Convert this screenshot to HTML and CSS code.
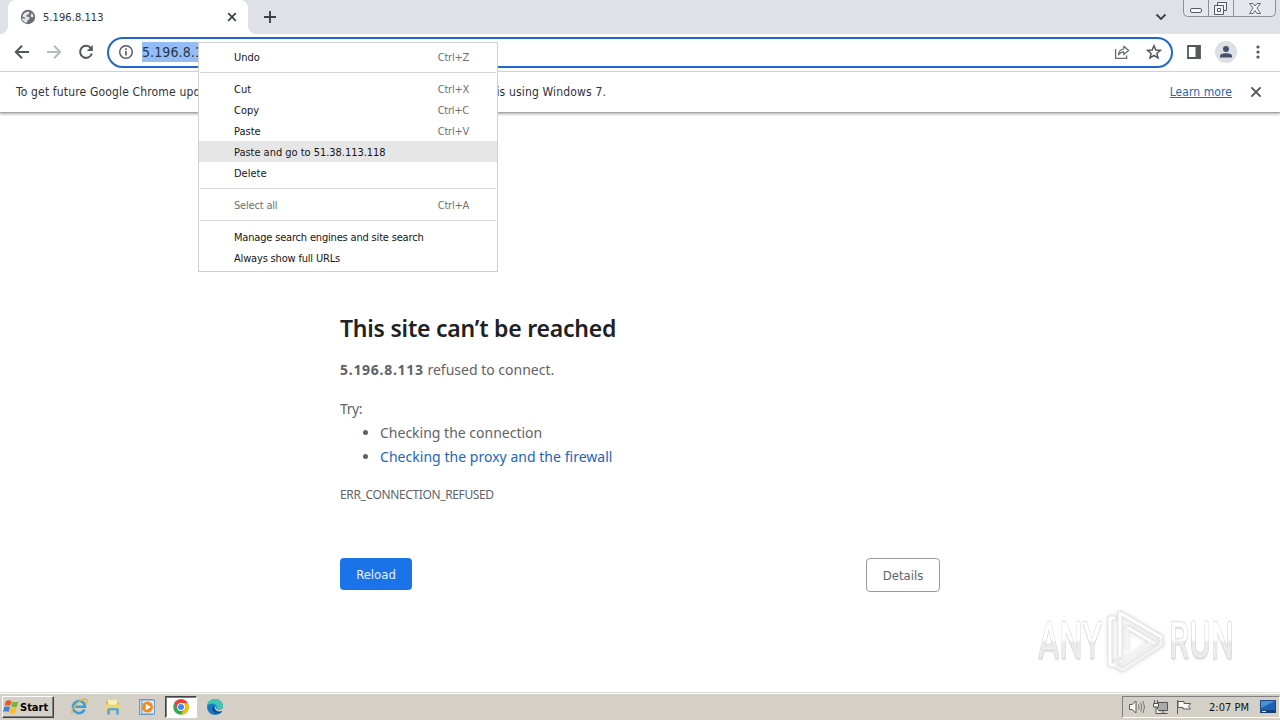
FILE: index.html
```html
<!DOCTYPE html>
<html lang="en">
<head>
<meta charset="utf-8">
<title>5.196.8.113</title>
<link rel="stylesheet" href="styles.css">
</head>
<body>
<div class="desktop">
  <header class="tabstrip">
    <div class="tab-prev"></div>
    <div class="tab">
      <svg class="favicon" width="16" height="16" viewBox="0 0 16 16"><circle cx="8" cy="8" r="7.2" fill="#6b6e73"/><path d="M2.200 7.600C3 5 5 3 7.800 2.400L9.600 3.200 8.600 5.400 6.600 6 6.200 7.400 9.200 8 9.800 9.600 7.600 11.600 7 13.800C4 13.600 2 11 2.200 9L5.400 10 4.600 8.200ZM11 4.800L12.400 4.600 13.600 7.400 12.200 8.600 10.600 7.400Z" fill="#e4e6e9"/></svg>
      <span class="tab-title">5.196.8.113</span>
      <svg class="tab-close" width="10" height="10" viewBox="0 0 10 10"><path d="M1.2 1.2L8.800 8.800M8.800 1.2L1.2 8.800" stroke="#3c4043" stroke-width="1.7"/></svg>
    </div>
    <svg class="new-tab" width="14" height="14" viewBox="0 0 14 14"><path d="M7 1V13M1 7H13" stroke="#3c4043" stroke-width="1.9"/></svg>
    <svg class="tab-search" width="12" height="8" viewBox="0 0 12 8"><path d="M1.5 1.5L6 6L10.5 1.5" fill="none" stroke="#3c4043" stroke-width="1.8"/></svg>
    <div class="window-buttons">
      <svg width="93" height="17" viewBox="0 0 93 17"><path d="M.5 0V12.500Q.5 16.500 4.500 16.500H88.500Q92.500 16.500 92.500 12.500V0M25.500 0V16M50.500 0V16" fill="none" stroke="#8b8f98"/><g fill="#f5f6f8" stroke="#555a62"><rect x="7.500" y="8.500" width="11" height="4" rx="1.500"/><path d="M34.500 2.500H43.500V10.500H34.500Z"/><path d="M31.500 5.500H40.500V14.500H31.500Z"/><path d="M34.500 8.500H37.500V11.500H34.500Z"/><path d="M66.500 3.500H70L72 6 74 3.500H77.500L74 8 77.500 13.500H74L72 10.500 70 13.500H66.500L70 8Z" stroke-width=".9"/></g></svg>
    </div>
  </header>

  <div class="toolbar">
    <svg class="back" width="16" height="16" viewBox="0 0 16 16"><path d="M15 8H2M8 1.700L1.800 8L8 14.300" fill="none" stroke="#54575b" stroke-width="2"/></svg>
    <svg class="forward" width="16" height="16" viewBox="0 0 16 16"><path d="M1 8H14M8 1.700L14.200 8L8 14.300" fill="none" stroke="#b9bbbe" stroke-width="2"/></svg>
    <svg class="reload" width="16" height="16" viewBox="0 0 16 16"><path d="M12.900 4.200A6 6 0 1 0 13.900 9.500" fill="none" stroke="#54575b" stroke-width="2"/><path d="M14.800 1V7H8.800Z" fill="#54575b"/></svg>
    <div class="omnibox">
      <svg class="info" width="16" height="16" viewBox="0 0 16 16"><circle cx="8" cy="8" r="6.300" fill="none" stroke="#54575b" stroke-width="1.400"/><path d="M8 7V11.600M8 4.300V5.900" stroke="#54575b" stroke-width="1.600"/></svg>
      <span class="url">5.196.8.113</span>
      <svg class="share" width="16" height="16" viewBox="0 0 16 16"><path d="M1.600 5V14.300H12.600V11.500" fill="none" stroke="#696c70" stroke-width="1.300"/><path d="M4.500 10.800C4.800 7 6.500 5.200 9.800 5V2.200L14.700 6.500 9.800 10.500V7.800C7.500 7.800 5.800 8.800 4.500 10.800Z" fill="none" stroke="#696c70" stroke-width="1.200" stroke-linejoin="round"/></svg>
      <svg class="star" width="16" height="16" viewBox="0 0 16 16"><path d="M8 1.700L9.800 6 14.400 6.400 10.900 9.400 12 14 8 11.500 4 14 5.100 9.400 1.600 6.400 6.200 6Z" fill="none" stroke="#54575b" stroke-width="1.500"/></svg>
    </div>
    <svg class="panel" width="14" height="14" viewBox="0 0 14 14"><path d="M1 1H13V13H1Z" fill="none" stroke="#54575b" stroke-width="1.800"/><path d="M8.500 1H13V13H8.500Z" fill="#54575b"/></svg>
    <svg class="avatar" width="22" height="22" viewBox="0 0 22 22"><circle cx="11" cy="11" r="11" fill="#dcdfe4"/><circle cx="11" cy="7.900" r="3" fill="#45506a"/><path d="M5 16.500V15Q5 12.300 11 12.300Q17 12.300 17 15V16.500Z" fill="#45506a"/></svg>
    <svg class="kebab" width="4" height="14" viewBox="0 0 4 14" fill="#54575b"><circle cx="2" cy="2" r="1.600"/><circle cx="2" cy="7" r="1.600"/><circle cx="2" cy="12" r="1.600"/></svg>
  </div>

  <div class="infobar">
    <span class="infobar-text">To get future Google Chrome updates, you'll need Windows 10 or later. This computer is using Windows 7.</span>
    <a class="learn">Learn more</a>
    <svg width="12" height="12" viewBox="0 0 12 12"><path d="M1.400 1.400L10.600 10.600M10.600 1.400L1.400 10.600" stroke="#54575b" stroke-width="1.900"/></svg>
  </div>

  <main class="page">
    <section class="error">
      <h1>This site can’t be reached</h1>
      <p class="summary"><b>5.196.8.113</b> <span>refused to connect.</span></p>
      <p class="try">Try:</p>
      <ul>
        <li>Checking the connection</li>
        <li><a>Checking the proxy and the firewall</a></li>
      </ul>
      <p class="code">ERR_CONNECTION_REFUSED</p>
      <div class="actions"><button class="primary">Reload</button><button class="secondary">Details</button></div>
    </section>
    <div class="watermark">
      <span>ANY</span>
      <svg width="60" height="64" viewBox="0 0 60 64" fill="none" stroke-linejoin="round" stroke-linecap="round"><g stroke="#e2e2e2" stroke-width="5"><path d="M8 9H4V56H8M14 47V4L55 28M21 18L48 34"/><path d="M10 53V57L16 61L55 36V30"/></g><g stroke="#fff" stroke-width="3"><path d="M8 9H4V56H8M14 47V4L55 28M21 18L48 34"/></g><path d="M10 53V57L16 61L55 36V30M14 53L46 33M21 18V40" stroke="#f3f3f3" stroke-width="3"/></svg>
      <span>RUN</span>
    </div>
  </main>

  <footer class="taskbar">
    <div class="start">
      <svg width="17" height="16" viewBox="0 0 17 16"><path d="M3 2Q6 .5 8.500 2L7.200 7Q4.500 5.700 1.600 7Z" fill="#e8562a"/><path d="M9.500 2.500Q12 4 15.500 2.500L14 7.700Q11 9 8.200 7.500Z" fill="#75b43c"/><path d="M1.300 8Q4 6.800 7 8L5.600 13Q3 11.600 0 13Z" fill="#3b83d1"/><path d="M7.900 8.500Q10.500 10 13.700 8.700L12.300 14Q9 15 6.500 13.500Z" fill="#f5bb2c"/></svg>
      <span>Start</span>
    </div>
    <div class="launch">
      <svg width="18" height="18" viewBox="0 0 18 18"><path d="M14.500 11.500A6 6 0 1 1 15 8.800H5.500" fill="none" stroke="#3a9edb" stroke-width="2.600"/><path d="M2.500 15.800C-1 13 11-1.500 16.300 1.800C17.500 3 16.500 4.800 15.800 5.800" fill="none" stroke="#e0b43c" stroke-width="1.400"/></svg>
    </div>
    <div class="launch">
      <svg width="18" height="18" viewBox="0 0 18 18"><path d="M2 3H7L8 5H15V13H2Z" fill="#dcb850"/><path d="M4 2H13V7H4Z" fill="#f7edb5"/><path d="M1.500 6.500H16.500V14H1.500Z" fill="#efd57a"/><path d="M3 16.500V12Q3 10 5 10H13Q15 10 15 12V16.500H12V12.500H6V16.500Z" fill="#63a8ce"/></svg>
    </div>
    <div class="launch">
      <svg width="18" height="18" viewBox="0 0 18 18"><rect x="1.500" y="1.500" width="13" height="15" fill="#bcd8ee" stroke="#6599c8"/><rect x="4" y="2" width="12.500" height="14" fill="#dceaf5" stroke="#6c9ac4"/><circle cx="9.500" cy="9" r="5.500" fill="#f28a1d"/><path d="M7.800 5.800L13 9L7.800 12.200Z" fill="#fff"/></svg>
    </div>
    <div class="launch active">
      <svg width="16" height="16" viewBox="0 0 16 16"><circle cx="8" cy="8" r="7.800" fill="#34a853"/><path d="M1.250 4.100A7.800 7.800 0 0 1 14.750 4.100L8 8Z" fill="#ea4335"/><path d="M14.750 4.100A7.800 7.800 0 0 1 8 15.800L11.400 10L8 4.100Z" fill="#fbbc05"/><path d="M1.250 4.100L4.600 10L8 8V4.100Z" fill="#ea4335"/><circle cx="8" cy="8" r="3.900" fill="#fff"/><circle cx="8" cy="8" r="3" fill="#4285f4"/></svg>
    </div>
    <div class="launch">
      <svg width="18" height="18" viewBox="0 0 18 18"><circle cx="9" cy="9" r="8" fill="#187ac5"/><path d="M1.200 8C1.500 3.500 5 1 9 1C14 1 17 4.500 17 8C17 11 14.500 12 12 11.600C10 11.300 11.500 10 10.500 8C9 5 4 4.500 1.200 8Z" fill="#41c6b4"/><path d="M6.800 8.500C5 12 8 16 13.500 15.500C16 14.500 16 13 15.800 12.700C12 15 8 12.500 8.500 9.500Z" fill="#114a91"/><path d="M9 8.500C11 9 9.700 11.300 12 11.800C14 12.300 16 11.500 17 9.800Q18 12 15.700 13C12 14.500 8.500 12 9 8.500Z" fill="#d5d2ca"/></svg>
    </div>
    <div class="tray">
      <svg width="18" height="16" viewBox="0 0 18 16"><path d="M1.500 5.500H4L8 2V14L4 10.500H1.500Z" fill="#f7f7f5" stroke="#5c5c5c"/><path d="M10.500 5.500Q12 8 10.500 10.500M12.700 3.500Q15 8 12.700 12.500M15 2Q18 8 15 14" fill="none" stroke="#777"/></svg>
      <svg width="18" height="16" viewBox="0 0 18 16"><path d="M5.500 3.500H15.500V11.500H5.500ZM7.500 14.500H15.500M11 11.500V14" fill="#aaa" stroke="#555"/><path d="M2.500 1V4M5.500 1V4M1.500 4.500H6.500V8H1.500ZM4 8V14.500H8" fill="#f5f5f5" stroke="#555"/></svg>
      <svg width="16" height="16" viewBox="0 0 16 16"><path d="M1.500 1V15M2 2.500H8V4.500H14.500L12.500 7.500 14.500 10H7V8.500H2Z" fill="#f7f7f5" stroke="#5c5c5c"/></svg>
      <span class="clock">2:07 PM</span>
      <svg width="16" height="14" viewBox="0 0 16 14"><path d="M.5.5H15.500V10.500H.5Z" fill="#2060b4" stroke="#174785"/><path d="M1 1H15L1 8Z" fill="#4d91d5"/><path d="M0 11H16V13H0Z" fill="#163d70"/><path d="M2 11.500H6" stroke="#d8ebfa"/></svg>
    </div>
  </footer>

  <div class="menu">
    <div class="item"><span>Undo</span><span class="key">Ctrl+Z</span></div>
    <hr>
    <div class="item"><span>Cut</span><span class="key">Ctrl+X</span></div>
    <div class="item"><span>Copy</span><span class="key">Ctrl+C</span></div>
    <div class="item"><span>Paste</span><span class="key">Ctrl+V</span></div>
    <div class="item hover"><span>Paste and go to 51.38.113.118</span></div>
    <div class="item"><span>Delete</span></div>
    <hr>
    <div class="item disabled"><span class="tight">Select all</span><span class="key">Ctrl+A</span></div>
    <hr>
    <div class="item"><span class="tight">Manage search engines and site search</span></div>
    <div class="item"><span class="tight">Always show full URLs</span></div>
  </div>
</div>
</body>
</html>
```
FILE: styles.css
```css
* { box-sizing: border-box; }
body { margin: 0; overflow: hidden; font-family: "DejaVu Sans Condensed", "Noto Sans", sans-serif; color: #303236; }
svg { display: block; flex: none; }
.desktop { position: relative; width: 1280px; height: 720px; display: flex; flex-direction: column; background: #fff; }

.tabstrip { height: 34px; flex: none; display: flex; align-items: center; background: linear-gradient(#dee1e6 24px, #fff 24px) left / 256px no-repeat #dee1e6; }
.tab-prev { width: 8px; height: 34px; border-bottom-right-radius: 8px; background: #dee1e6; }
.tab { width: 240px; height: 34px; display: flex; align-items: center; padding: 0 11px 0 12px; background: #fff; border-radius: 8px 8px 0 0; }
.tab-title { margin-left: 7px; flex: 1; font-size: 11px; letter-spacing: .07px; }
.new-tab { width: 32px; height: 34px; padding: 10px 3px 10px 15px; background: #dee1e6; border-bottom-left-radius: 8px; }
.tab-search { margin-left: auto; }
.window-buttons { margin-left: 16px; margin-right: 4px; align-self: flex-start; background: #e4e7eb; border-radius: 0 0 4px 4px; }

.toolbar { height: 38px; flex: none; display: flex; align-items: center; padding: 0 20px 0 14px; border-bottom: 1px solid #d9dadc; background: #fff; }
.toolbar svg { margin-bottom: 1px; }
.forward, .reload { margin-left: 16px; }
.omnibox { width: 1066px; height: 31px; margin-left: 13px; display: flex; align-items: center; padding: 0 9px; border: 2px solid #1f67c9; border-radius: 16px; }
.url { margin: 0 0 1px 8px; height: 20px; line-height: 21px; font-size: 14px; background: #94bdf5; color: #26364b; letter-spacing: .1px; }
.omnibox .share { margin-left: auto; }
.star { margin-left: 16px; }
.panel { margin-left: 14px; }
.avatar { margin-left: 14px; }
.kebab { margin-left: auto; }

.infobar { height: 41px; flex: none; display: flex; align-items: center; padding: 0 18px 0 16px; font-size: 12px; border-bottom: 1px solid #a6a7a8; box-shadow: 0 1px 3px #a9a9a9; background: #fff; z-index: 1; }
.infobar-text { flex: 1; white-space: nowrap; letter-spacing: .16px; }
.learn { color: #2865b5; text-decoration: underline; margin-right: 18px; letter-spacing: .08px; }

.page { height: 579px; flex: none; display: flex; position: relative; padding: 201px 0 0 340px; }
.error { width: 600px; font-family: "Noto Sans", sans-serif; color: #5f6368; font-size: 14px; }
h1 { margin: 0; height: 29px; line-height: 29px; font-size: 23px; font-weight: 600; color: #202124; white-space: nowrap; letter-spacing: -.22px; }
p { margin: 0; line-height: 24px; }
.summary { margin-top: 15px; }
.summary b { letter-spacing: .72px; }
.try { margin-top: 15px; letter-spacing: -.4px; }
ul { margin: 0; padding: 0 0 0 40px; line-height: 24px; }
li a { color: #1e65b8; letter-spacing: .03px; }
.code { margin-top: 14px; font-size: 12px; white-space: nowrap; letter-spacing: -.37px; }
.actions { margin-top: 51px; display: flex; justify-content: space-between; }
button { font-family: "DejaVu Sans Condensed", "Noto Sans", sans-serif; font-size: 13px; padding: 0; border-radius: 4px; }
.primary { width: 72px; height: 32px; border: 0; background: #1a73e8; color: #e7f1fe; }
.secondary { width: 74px; height: 34px; border: 1px solid #999b9e; background: #fff; color: #5f6368; }

.watermark { position: absolute; left: 1038px; top: 496px; height: 64px; display: flex; align-items: center; gap: 3px; font-family: Roboto, sans-serif; font-size: 50px; font-weight: 500; }
.watermark span { display: block; width: 104px; margin-right: -39px; background: linear-gradient(#fff 48%, #ebebeb 52%); -webkit-background-clip: text; background-clip: text; color: transparent; filter: drop-shadow(0 0 1px #b8b8b8) drop-shadow(0 1px 1px #dcdcdc); transform-origin: left center; transform: scaleX(.65); white-space: nowrap; }
.watermark svg { filter: drop-shadow(0 0 2px #ddd); }

.taskbar { height: 28px; flex: none; display: flex; align-items: center; background: #d4d0c8; border-top: 1px solid #dfddd8; box-shadow: inset 0 1px #fff; padding: 1px 0 0 2px; }
.start { width: 52px; height: 22px; display: flex; align-items: center; padding-left: 0; margin-right: 9px; font-size: 11px; font-weight: 700; color: #000; border: 1px solid; border-color: #fff #404040 #404040 #fff; box-shadow: inset -1px -1px #808080; }
.launch { width: 32px; height: 22px; display: flex; align-items: center; justify-content: center; margin-right: 2px; }
.active { background: #fff; border: 1px solid; border-color: #404040 #fff #fff #404040; box-shadow: inset 1px 1px #808080; }
.tray { width: 158px; height: 22px; margin-left: auto; padding: 0 3px 0 5px; display: flex; align-items: center; gap: 6px; border: 1px solid; border-color: #808080 #fff #fff #808080; }
.clock { flex: 1; padding-left: 6px; text-align: center; font-size: 11px; color: #111; white-space: nowrap; }

.menu { position: absolute; z-index: 2; left: 198px; top: 42px; width: 300px; height: 230px; padding: 3px 0; border: 1px solid #d0d0d0; background: #fff; font-size: 11px; color: #151515; }
.item { height: 21px; line-height: 23px; display: flex; justify-content: space-between; padding: 0 28px 0 35px; white-space: nowrap; }
.hover { background: #e6e6e6; letter-spacing: -.03px; }
.tight { letter-spacing: -.18px; }
.key { letter-spacing: -.25px; }
.key, .disabled { color: #707070; }
hr { height: 1px; margin: 5px 1px; border: 0; background: #d7d7d7; }
```
